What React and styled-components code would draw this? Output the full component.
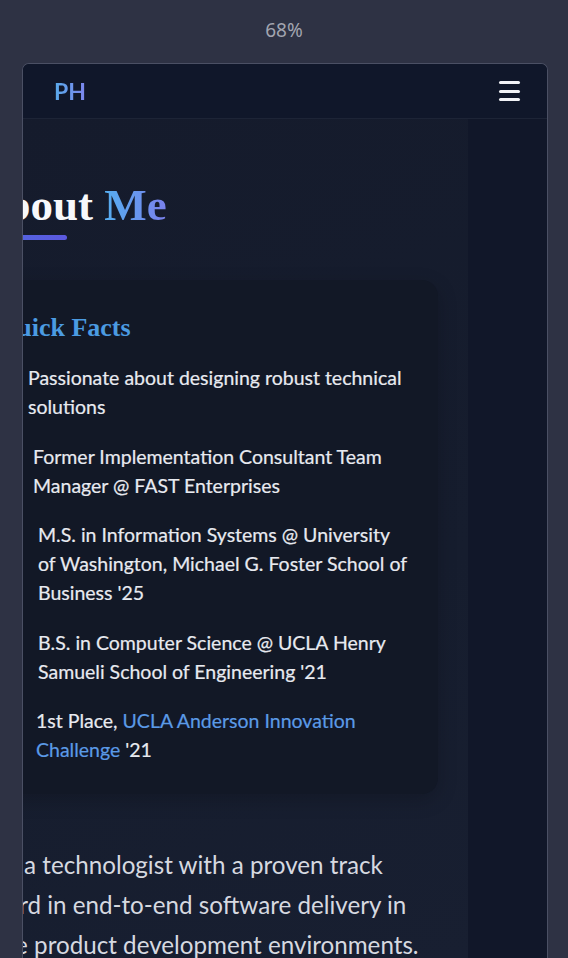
import React from "react"
import styled, { createGlobalStyle } from "styled-components"
import { GraduationCap, Briefcase, Lightbulb, Trophy } from "lucide-react"

const GlobalStyle = createGlobalStyle`
  html, body {
    margin: 0;
    padding: 0;
    background: #2e3244;
  }
  * { box-sizing: border-box; }
`

const facts = [
  { icon: Lightbulb, indent: 31, text: "Passionate about designing robust technical solutions" },
  { icon: Briefcase, indent: 36, text: "Former Implementation Consultant Team Manager @ FAST Enterprises" },
  { icon: GraduationCap, indent: 41, text: "M.S. in Information Systems @ University of Washington, Michael G. Foster School of Business '25" },
  { icon: GraduationCap, indent: 41, text: "B.S. in Computer Science @ UCLA Henry Samueli School of Engineering '21" },
  { icon: Trophy, indent: 39, link: "UCLA Anderson Innovation Challenge" },
]

const intro = [
  { shift: 0, text: "I am a technologist with a proven track" },
  { shift: 0, text: "record in end-to-end software delivery in" },
  { shift: 6, text: "agile product development environments." },
]

export default function App() {
  return (
    <>
      <GlobalStyle />
      <Stage>
        <ZoomLabel>68%</ZoomLabel>
        <Frame>
          <NavBar>
            <Logo>PH</Logo>
            <Burger aria-label="menu">
              <span />
              <span />
              <span />
            </Burger>
          </NavBar>
          <Viewport>
            <Page>
              <Title>
                About <Accent>Me</Accent>
              </Title>
              <Underline />
              <Card>
                <CardTitle>Quick Facts</CardTitle>
                <Facts>
                  {facts.map((f, i) => {
                    const Icon = f.icon
                    return (
                      <Fact key={i}>
                        <Bullet $w={f.indent}>
                          <Icon size={18} color="#4f8fe0" strokeWidth={2} />
                        </Bullet>
                        {f.link ? (
                          <FactText>
                            1st Place, <FactLink href="#">{f.link}</FactLink> '21
                          </FactText>
                        ) : (
                          <FactText>{f.text}</FactText>
                        )}
                      </Fact>
                    )
                  })}
                </Facts>
              </Card>
              <Intro>
                {intro.map((l, i) => (
                  <IntroLine key={i} $shift={l.shift}>{l.text}</IntroLine>
                ))}
              </Intro>
            </Page>
            <Gutter />
          </Viewport>
        </Frame>
      </Stage>
    </>
  )
}

const Stage = styled.div`
  height: 100vh;
  overflow: hidden;
  display: flex;
  flex-direction: column;
  background: #2e3244;
`

const ZoomLabel = styled.div`
  height: 63px;
  display: flex;
  align-items: center;
  justify-content: center;
  padding-bottom: 4px;
  font-family: "Noto Sans", "Open Sans", sans-serif;
  font-size: 19px;
  color: #a2a5b0;
`

const Frame = styled.div`
  flex: 1;
  margin: 0 20px 0 22px;
  border: 1px solid #4b5064;
  border-bottom: none;
  border-radius: 7px 7px 0 0;
  overflow: hidden;
  display: flex;
  flex-direction: column;
  background: #131a2b;
`

const NavBar = styled.header`
  height: 55px;
  flex-shrink: 0;
  display: flex;
  align-items: center;
  justify-content: space-between;
  padding: 0 27px 0 31px;
  background: #10172a;
  border-bottom: 1px solid #1d2436;
`

const Logo = styled.div`
  font-family: Lato, "Open Sans", sans-serif;
  font-weight: 700;
  font-size: 23px;
  background: linear-gradient(90deg, #58aaea, #7d85ee);
  -webkit-background-clip: text;
  background-clip: text;
  color: transparent;
`

const Burger = styled.div`
  width: 21px;
  display: flex;
  flex-direction: column;
  gap: 5.5px;
  span {
    display: block;
    height: 3px;
    border-radius: 2px;
    background: #f1f2f6;
  }
`

const Viewport = styled.div`
  flex: 1;
  display: flex;
  overflow: hidden;
`

const Page = styled.main`
  width: 495px;
  flex-shrink: 0;
  margin-left: -50px;
  padding: 59px 30px 0 0;
  background: linear-gradient(160deg, #151b2c 0%, #161d2e 60%, #181f31 100%);
`

const Gutter = styled.div`
  flex: 1;
  background: #111729;
`

const Title = styled.h2`
  margin: 0;
  font-family: "Liberation Serif", "Times New Roman", serif;
  font-weight: 700;
  font-size: 45px;
  line-height: 54px;
  color: #f7f8fb;
  white-space: nowrap;
`

const Accent = styled.span`
  background: linear-gradient(90deg, #55aef0, #7a80ec);
  -webkit-background-clip: text;
  background-clip: text;
  color: transparent;
`

const Underline = styled.div`
  width: 94px;
  height: 5px;
  margin-top: 3px;
  border-radius: 3px;
  background: linear-gradient(90deg, #4d6ce0, #5b58de);
`

const Card = styled.section`
  margin-top: 40px;
  padding: 32px 30px 30px 24px;
  border-radius: 16px;
  background: #121826;
  box-shadow: 0 6px 20px rgba(0, 0, 0, 0.18);
`

const CardTitle = styled.h3`
  margin: 0 0 20px;
  font-family: "Liberation Serif", "Times New Roman", serif;
  font-weight: 700;
  font-size: 26px;
  line-height: 31px;
  color: #4b9be2;
`

const Facts = styled.ul`
  list-style: none;
  margin: 0;
  padding: 0;
  display: flex;
  flex-direction: column;
  gap: 20.5px;
`

const Fact = styled.li`
  display: flex;
  align-items: flex-start;
`

const Bullet = styled.span`
  width: ${p => p.$w}px;
  flex-shrink: 0;
  padding-top: 5px;
`

const FactText = styled.span`
  font-family: Lato, "Open Sans", sans-serif;
  font-size: 19.5px;
  line-height: 29px;
  color: #e8eaf0;
  -webkit-text-stroke: 0.2px #e8eaf0;
`

const FactLink = styled.a`
  color: #5b9ae6;
  text-decoration: none;
  -webkit-text-stroke: 0.2px #5b9ae6;
`

const Intro = styled.p`
  margin: 51px 0 0;
  font-family: Lato, "Open Sans", sans-serif;
  font-size: 24.2px;
  line-height: 40px;
  color: #d6d9e0;
  white-space: nowrap;
`

const IntroLine = styled.span`
  display: block;
  margin-left: ${p => p.$shift}px;
`
